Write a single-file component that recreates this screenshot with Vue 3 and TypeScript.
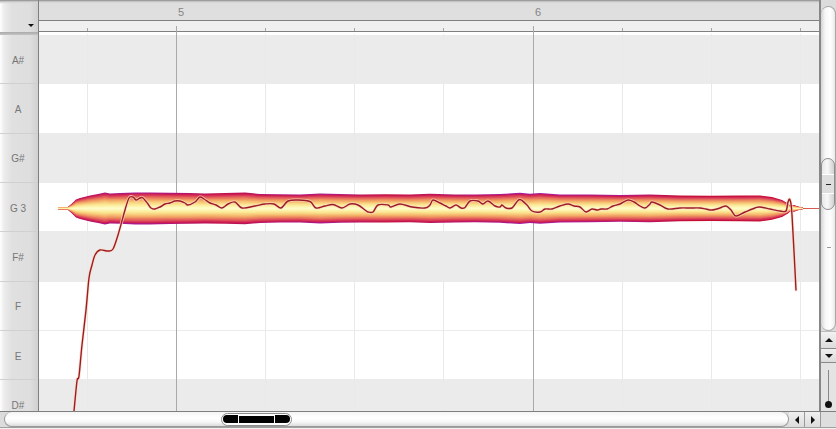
<script setup lang="ts">
import { computed } from 'vue'

type Point = [number, number]

const notes = [
  { label: 'A#', dark: true },
  { label: 'A', dark: false },
  { label: 'G#', dark: true },
  { label: 'G 3', dark: false },
  { label: 'F#', dark: true },
  { label: 'F', dark: false },
  { label: 'E', dark: false },
  { label: 'D#', dark: true },
]

const bars = [
  { label: '5', x: 176 },
  { label: '6', x: 533 },
]
const beats = [87, 265, 354, 443, 622, 711, 800]

const CENTER = 208.4

// half width of the note blob at a given x
const envelope: Point[] = [
  [58, 1.5], [68, 1.5], [72, 5], [76, 9], [80, 10.5], [90, 13], [98, 14.5], [105, 16], [110, 15],
  [120, 15.4], [135, 16], [150, 16], [170, 15.6], [190, 15.4], [205, 15], [225, 15.4], [245, 15.8],
  [260, 14.5], [280, 14.2], [300, 14], [320, 15], [340, 14.4], [360, 14], [385, 14.2], [410, 13.8],
  [430, 14.6], [455, 14], [475, 13.8], [500, 14.4], [520, 15.6], [530, 14.6], [540, 15.4], [560, 14],
  [590, 13.8], [620, 13.4], [650, 13.8], [680, 12.8], [710, 12.6], [740, 12.8], [760, 13], [772, 11.4],
  [782, 8.5], [788, 5], [790, 3], [794, 3.4], [798, 1.8], [803, 0.8],
]

const pitch: Point[] = [
  [74, 411], [77, 381], [79, 376], [82, 345], [86, 310], [89, 278], [92, 265], [95, 255], [100, 250],
  [108, 251], [113, 249], [118, 235], [125, 210], [129, 198], [133, 197], [136, 200], [140, 198],
  [143, 198], [148, 204], [151, 208], [155, 209], [160, 207], [165, 204], [170, 203], [175, 201],
  [180, 201], [185, 203], [188, 205], [195, 202], [200, 197], [204, 199], [210, 203], [216, 205],
  [222, 208], [228, 204], [235, 202], [242, 208], [255, 206], [265, 204], [274, 204], [281, 208],
  [288, 201], [298, 200], [310, 201.5], [316, 208], [325, 206], [333, 204.5], [342, 208], [350, 204],
  [358, 205], [365, 210], [368, 212], [373, 212], [378, 205], [388, 205], [391, 207], [400, 204],
  [412, 207], [425, 208], [430, 205], [433, 200], [440, 203], [446, 206], [450, 208], [456, 205],
  [461, 208], [465, 207.5], [470, 201], [478, 201], [483, 204], [488, 201], [495, 206], [500, 207],
  [502, 205], [506, 208], [512, 208], [516, 203], [520, 199.5], [527, 205], [532, 211], [540, 212],
  [545, 209], [552, 209], [560, 206], [568, 204], [574, 206], [580, 207], [586, 212], [592, 209],
  [597, 210], [601, 209], [607, 209], [613, 206], [620, 204], [628, 200], [634, 202],
  [640, 206], [645, 208], [650, 204], [652, 202], [660, 205], [668, 209], [680, 208], [690, 208],
  [700, 208], [706, 209], [712, 210], [720, 208], [726, 206], [731, 210], [736, 216], [745, 212],
  [755, 208], [760, 207], [770, 209], [780, 211], [786, 211], [788, 202], [790, 200], [792, 215],
  [796, 290],
]

const bandStops: [number, string][] = [
  [0.93, '#cc1f4f'],
  [0.86, '#d83c58'],
  [0.78, '#e25c5c'],
  [0.7, '#e97a5e'],
  [0.62, '#ef9662'],
  [0.54, '#f3ae6a'],
  [0.46, '#f6c476'],
  [0.38, '#f9d684'],
  [0.3, '#fbe494'],
  [0.22, '#fcefa2'],
  [0.14, '#fdf6b0'],
  [0.07, '#fefbc8'],
]

function bandPoints(factor: number) {
  const top = envelope.map(([x, h]) => `${x},${(CENTER - h * factor).toFixed(1)}`)
  const bottom = [...envelope].reverse().map(([x, h]) => `${x},${(CENTER + h * factor).toFixed(1)}`)
  return [...top, ...bottom].join(' ')
}

const edge = computed(() => bandPoints(1))
const bands = computed(() => bandStops.map(([factor, color]) => ({ color, points: bandPoints(factor) })))

// catmull-rom through the pitch samples
const pitchPath = computed(() => {
  const p = pitch
  let d = `M${p[0][0]} ${p[0][1]}`
  for (let i = 0; i < p.length - 1; i++) {
    const a = p[Math.max(i - 1, 0)]
    const b = p[i]
    const c = p[i + 1]
    const e = p[Math.min(i + 2, p.length - 1)]
    const c1x = b[0] + (c[0] - a[0]) / 6
    const c1y = b[1] + (c[1] - a[1]) / 6
    const c2x = c[0] - (e[0] - b[0]) / 6
    const c2y = c[1] - (e[1] - b[1]) / 6
    d += ` C${c1x.toFixed(1)} ${c1y.toFixed(1)} ${c2x.toFixed(1)} ${c2y.toFixed(1)} ${c[0]} ${c[1]}`
  }
  return d
})
</script>

<template>
  <div class="editor">
    <div class="workspace">
      <aside class="keys">
        <div class="corner">
          <span class="menu-arrow"></span>
        </div>
        <div v-for="note in notes" :key="note.label" class="key">{{ note.label }}</div>
      </aside>

      <main class="center">
        <header class="timeline">
          <div class="bars">
            <span
              v-for="bar in bars"
              :key="bar.label"
              class="bar-label"
              :style="{ left: bar.x - 39 + 2 + 'px' }"
            >{{ bar.label }}</span>
          </div>
          <div class="ruler"></div>
          <div class="gap"></div>
        </header>
        <div class="rows">
          <div v-for="note in notes" :key="note.label" class="row" :class="{ dark: note.dark }"></div>
        </div>
        <svg class="overlay" width="780" height="411" viewBox="39 0 780 411">
          <defs>
            <linearGradient id="blob-edge" gradientUnits="userSpaceOnUse" x1="58" x2="803" y1="0" y2="0">
              <stop offset="0" stop-color="#c0104c" />
              <stop offset="0.1" stop-color="#a81a96" />
              <stop offset="0.22" stop-color="#c0104c" />
              <stop offset="0.36" stop-color="#ac1a90" />
              <stop offset="0.44" stop-color="#c2103e" />
              <stop offset="0.62" stop-color="#a81a9c" />
              <stop offset="0.76" stop-color="#b0188a" />
              <stop offset="0.84" stop-color="#c40c30" />
              <stop offset="1" stop-color="#c40c30" />
            </linearGradient>
          </defs>
          <line v-for="x in beats" :key="x" :x1="x + 0.5" :x2="x + 0.5" y1="34" y2="411" class="beat" />
          <line v-for="x in beats" :key="'t' + x" :x1="x + 0.5" :x2="x + 0.5" y1="28" y2="31" class="beat-tick" />
          <line v-for="bar in bars" :key="bar.x" :x1="bar.x + 0.5" :x2="bar.x + 0.5" y1="26" y2="411" class="bar" />
          <line x1="803" x2="819" y1="208.5" y2="208.5" class="tail" />
          <polygon :points="edge" fill="url(#blob-edge)" />
          <polygon v-for="band in bands" :key="band.color" :points="band.points" :fill="band.color" />
          <path :d="pitchPath" class="pitch-halo" />
          <path :d="pitchPath" class="pitch" />
        </svg>
      </main>

      <aside class="vscroll">
        <div class="track">
          <div class="thumb">
            <div class="thumb-part"></div>
            <div class="thumb-part mid"><span class="dash"></span></div>
            <div class="thumb-part"></div>
          </div>
          <span class="tick"></span>
        </div>
        <div class="step up"><span class="tri tri-up"></span></div>
        <div class="step down"><span class="tri tri-down"></span></div>
        <div class="zoom">
          <span class="zoom-line"></span>
          <span class="zoom-dot"></span>
        </div>
      </aside>
    </div>

    <footer class="hscroll">
      <div class="htrack">
        <div class="hthumb">
          <span class="seg seg-left"></span>
          <span class="seg seg-mid"></span>
          <span class="seg seg-right"></span>
        </div>
      </div>
      <div class="hstep"><span class="tri tri-left"></span></div>
      <div class="hstep"><span class="tri tri-right"></span></div>
      <div class="hcorner"></div>
    </footer>
  </div>
</template>

<style>
html, body {
  margin: 0;
  background: #f2f2f2;
  overflow: hidden;
}
</style>

<style scoped>
.editor {
  width: 836px;
  height: 429px;
  display: flex;
  flex-direction: column;
  font-family: "Liberation Sans", Arial, sans-serif;
  overflow: hidden;
}

.workspace {
  display: flex;
  height: 411px;
  flex: none;
}

.keys {
  width: 39px;
  flex: none;
  box-sizing: border-box;
  border-right: 1px solid #7f7f7f;
  background: linear-gradient(to right, #fff 0, #ececec 4px, #e0e0e0 12px, #dedede 30px, #d2d2d2 37px);
  overflow: hidden;
}

.corner {
  height: 35px;
  box-sizing: border-box;
  position: relative;
  background:
    linear-gradient(to bottom, #8a8a8a 0, #d6d6d6 2px, transparent 4px) top / 100% 4px no-repeat,
    linear-gradient(to bottom, #aaa, #c4c4c4) bottom / 100% 3px no-repeat;
}

.menu-arrow {
  position: absolute;
  left: 28px;
  top: 24px;
  width: 0;
  height: 0;
  border-left: 3px solid transparent;
  border-right: 3px solid transparent;
  border-top: 3px solid #111;
}

.key {
  height: 49.33px;
  box-sizing: border-box;
  border-bottom: 1px solid #d0d0d0;
  padding: 2px 2px 0 0;
  display: flex;
  align-items: center;
  justify-content: center;
  font-size: 10px;
  color: #767676;
}

.center {
  width: 780px;
  flex: none;
  position: relative;
  overflow: hidden;
}

.timeline {
  height: 35px;
  display: flex;
  flex-direction: column;
}

.bars {
  height: 20px;
  flex: none;
  box-sizing: border-box;
  position: relative;
  background: linear-gradient(to bottom, #8a8a8a 0, #d6d6d6 2px, #dfdfdf 4px);
}

.bar-label {
  position: absolute;
  top: 6px;
  font-size: 11px;
  line-height: 13px;
  color: #858585;
}

.ruler {
  height: 12px;
  flex: none;
  box-sizing: border-box;
  border-top: 1px solid #808080;
  border-bottom: 1px solid #808080;
  background: #f0f0f0;
}

.gap {
  flex: 1;
  background: #fff;
}

.row {
  height: 49.33px;
  box-sizing: border-box;
  border-bottom: 1px solid #ebebeb;
  background: #fff;
}

.row.dark {
  background: #ebebeb;
}

.overlay {
  position: absolute;
  left: 0;
  top: 0;
}

.beat {
  stroke: #e9e9e9;
  stroke-width: 1;
}

.beat-tick {
  stroke: #a6a6a6;
  stroke-width: 1;
}

.bar {
  stroke: #a9a9a9;
  stroke-width: 1;
}

.tail {
  stroke: #d85a50;
  stroke-width: 1;
}

.pitch,
.pitch-halo {
  fill: none;
  stroke-linejoin: round;
  stroke-linecap: round;
}

.pitch {
  stroke: #9c1c24;
  stroke-width: 1.4;
}

.pitch-halo {
  stroke: #fbd9c4;
  stroke-opacity: 0.8;
  stroke-width: 3;
}

.vscroll {
  width: 17px;
  flex: none;
  box-sizing: border-box;
  border-left: 2px solid #878787;
  display: flex;
  flex-direction: column;
  background: #dcdcdc;
}

.track {
  flex: 1;
  margin-top: 6px;
  border: 1px solid #a8a8a8;
  border-left: none;
  border-radius: 9px;
  background: linear-gradient(to right, #d4d4d4 0, #f6f6f6 4px, #fff 9px, #f0f0f0 13px, #d8d8d8 15px);
  display: flex;
  flex-direction: column;
  align-items: center;
  position: relative;
}

.thumb {
  position: absolute;
  left: 0;
  right: 0;
  top: 151px;
  height: 52px;
  box-sizing: border-box;
  border: 1px solid #8e8e8e;
  border-radius: 8px;
  overflow: hidden;
  display: flex;
  flex-direction: column;
  background: linear-gradient(to right, #e8e8e8, #f8f8f8 45%, #d0d0d0);
}

.thumb-part {
  flex: 1;
  display: flex;
  align-items: center;
  justify-content: center;
}

.thumb-part.mid {
  flex: none;
  height: 18px;
  border-top: 1px solid #fff;
  border-bottom: 1px solid #fff;
  background: #dedede;
}

.dash {
  width: 5px;
  height: 1px;
  background: #222;
}

.tick {
  position: absolute;
  left: 6px;
  top: 240px;
  width: 4px;
  height: 1px;
  background: #9a9a9a;
}

.step {
  flex: none;
  display: flex;
  align-items: center;
  justify-content: center;
  box-sizing: border-box;
  border-bottom: 1px solid #8a8a8a;
}

.step.up {
  height: 18px;
  border-top: 1px solid #bdbdbd;
  background: linear-gradient(to bottom, #f2f2f2, #dcdcdc);
}

.step.down {
  height: 14px;
  background: linear-gradient(to bottom, #efefef, #dcdcdc);
}

.tri {
  width: 0;
  height: 0;
  display: block;
}

.tri-up {
  border-left: 4px solid transparent;
  border-right: 4px solid transparent;
  border-bottom: 4px solid #111;
}

.tri-down {
  border-left: 4px solid transparent;
  border-right: 4px solid transparent;
  border-top: 4px solid #111;
}

.tri-left {
  border-top: 4px solid transparent;
  border-bottom: 4px solid transparent;
  border-right: 4px solid #111;
}

.tri-right {
  border-top: 4px solid transparent;
  border-bottom: 4px solid transparent;
  border-left: 4px solid #111;
}

.zoom {
  height: 48px;
  flex: none;
  position: relative;
  background: #e4e4e4;
}

.zoom-line {
  position: absolute;
  left: 7px;
  top: 7px;
  width: 1px;
  height: 34px;
  background: #888;
}

.zoom-dot {
  position: absolute;
  left: 4px;
  top: 38px;
  width: 7px;
  height: 7px;
  border-radius: 50%;
  background: #111;
}

.hscroll {
  height: 17px;
  flex: none;
  box-sizing: border-box;
  border-top: 1px solid #7f7f7f;
  border-bottom: 1px solid #a0a0a0;
  display: flex;
  background: #dcdcdc;
}

.htrack {
  flex: 1;
  margin-left: 4px;
  border: 1px solid #9a9a9a;
  border-top: none;
  border-radius: 8px;
  background: linear-gradient(to bottom, #f4f4f4, #fff 40%, #f8f8f8 70%, #dcdcdc);
  display: flex;
  align-items: center;
}

.hthumb {
  margin-left: 216px;
  width: 71px;
  height: 13px;
  flex: none;
  box-sizing: border-box;
  border: 1px solid #8e8e8e;
  border-radius: 7px;
  display: flex;
  align-items: center;
  gap: 1px;
  padding: 0 1px;
  background: #fff;
}

.seg {
  height: 8px;
  background: #000;
}

.seg-left {
  width: 15px;
  border-radius: 4px 0 0 4px;
}

.seg-mid {
  width: 36px;
  height: 7px;
}

.seg-right {
  width: 15px;
  border-radius: 0 4px 4px 0;
}

.hstep {
  width: 16px;
  flex: none;
  box-sizing: border-box;
  border-right: 1px solid #9a9a9a;
  display: flex;
  align-items: center;
  justify-content: center;
  background: linear-gradient(to bottom, #f0f0f0, #dcdcdc);
}

.hcorner {
  width: 15px;
  flex: none;
  background: #dedede;
}
</style>
